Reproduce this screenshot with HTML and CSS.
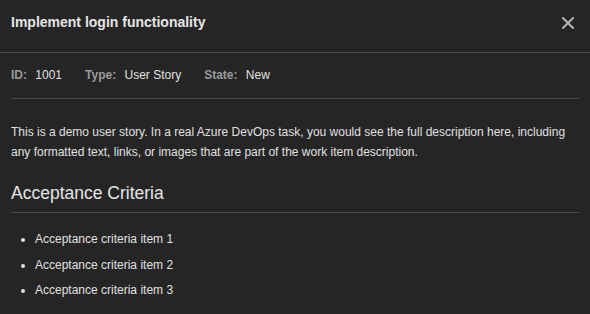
FILE: index.html
```html
<!DOCTYPE html>
<html lang="en">

<head>
    <meta charset="UTF-8">
    <meta name="viewport" content="width=device-width, initial-scale=1.0">
    <title>Work Item 1001</title>
    <link rel="stylesheet" href="styles.css">
</head>

<body>
    <div class="dialog">
        <div class="dialog-header">
            <h1 class="dialog-title">Implement login functionality</h1>
            <button class="close-button" aria-label="Close">
                <svg width="12" height="12" viewBox="0 0 12 12">
                    <path d="M1 1 L11 11 M11 1 L1 11" stroke="currentColor" stroke-width="2" stroke-linecap="square" />
                </svg>
            </button>
        </div>

        <div class="dialog-body">
            <div class="meta">
                <span class="meta-item"><span class="meta-label">ID:</span> 1001</span>
                <span class="meta-item"><span class="meta-label">Type:</span> User Story</span>
                <span class="meta-item"><span class="meta-label">State:</span> New</span>
            </div>

            <p class="description">This is a demo user story. In a real Azure DevOps task, you would see the full description here, including any formatted text, links, or images that are part of the work item description.</p>

            <h2 class="section-title">Acceptance Criteria</h2>
            <ul class="criteria">
                <li>Acceptance criteria item 1</li>
                <li>Acceptance criteria item 2</li>
                <li>Acceptance criteria item 3</li>
            </ul>
        </div>
    </div>
</body>

</html>
```

FILE: styles.css
```css
body {
    font-family: 'Liberation Sans', Arial, sans-serif;
    margin: 0;
    padding: 0;
    background-color: #252525;
    color: #dcdcdc;
}

.dialog {
    width: 590px;
    height: 314px;
    background-color: #252525;
}

.dialog-header {
    display: flex;
    align-items: flex-start;
    justify-content: space-between;
    padding: 12px 15px 20px 11px;
    border-bottom: 1px solid #464646;
}

.dialog-title {
    margin: 0;
    font-size: 14px;
    line-height: 20px;
    font-weight: bold;
    color: #e6e6e6;
}

.close-button {
    background: none;
    border: none;
    padding: 0;
    margin-top: 5px;
    width: 14px;
    height: 12px;
    color: #b4b4b4;
    cursor: pointer;
    display: flex;
    justify-content: center;
}

.dialog-body {
    padding: 0 11px;
}

.meta {
    display: flex;
    gap: 23px;
    padding: 14px 0 15px;
    font-size: 12px;
    line-height: 16px;
    border-bottom: 1px solid #464646;
    color: #e0e0e0;
}

.meta-label {
    font-weight: bold;
    color: #9a9a9a;
    margin-right: 5px;
}

.description {
    margin: 23px 0 20px;
    font-size: 12px;
    line-height: 20px;
    color: #e0e0e0;
}

.section-title {
    margin: 0;
    padding-bottom: 8px;
    font-size: 17.5px;
    line-height: 22px;
    font-weight: normal;
    color: #e6e6e6;
    border-bottom: 1px solid #464646;
}

.criteria {
    margin: 17px 0 0;
    padding-left: 24px;
    font-size: 12px;
    line-height: 18px;
    color: #e0e0e0;
}

.criteria li {
    margin-bottom: 7.5px;
}
```
